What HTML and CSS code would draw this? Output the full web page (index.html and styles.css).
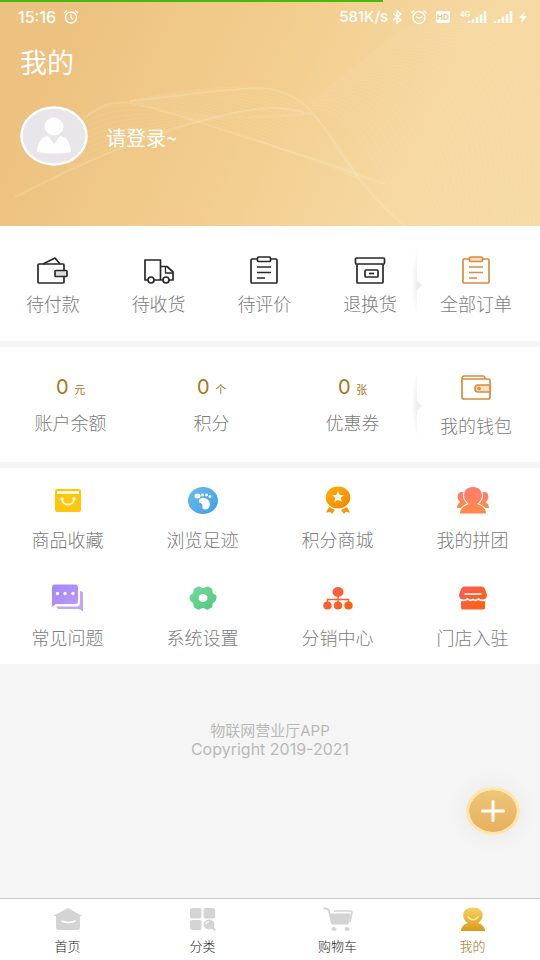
FILE: index.html
```html
<!DOCTYPE html>
<html lang="zh-CN">
<head>
<meta charset="utf-8">
<meta name="viewport" content="width=device-width, initial-scale=1">
<title>我的</title>
<link rel="stylesheet" href="styles.css">
</head>
<body>
<header class="hero">
  <svg class="waves" viewBox="0 0 540 226" preserveAspectRatio="none" aria-hidden="true">
    <g id="mesh"></g>
    <path class="wave-bright" d="M84 118C105 100 125 100 145 106C190 118 210 126 270 145S350 172 385 184"/>
    <path class="wave-bright" d="M130 101C180 96 230 88 262 88C312 93 320 125 360 180C375 198 390 215 406 226"/>
    <path class="wave-bright" d="M15 197C90 158 160 130 220 116S290 110 312 114"/>
  </svg>
  <div class="load"></div>
  <div class="status">
    <span class="clock">15:16</span>
    <svg class="s-alarm" viewBox="0 0 16 16"><circle cx="8" cy="8.500" r="5.500"/><path d="M1 4L4 1.500M15 4L12 1.500M8 5.500V8.500L10 10.500"/></svg>
    <span class="speed">581K/s</span>
    <svg class="s-bt" viewBox="0 0 12 16"><path d="M2 4.500L10 11L6 14V2L10 5L2 11.500"/></svg>
    <svg class="s-alarm2" viewBox="0 0 16 16"><circle cx="8" cy="8.500" r="6"/><path d="M.5 4L3.500 1.500M15.500 4L12.500 1.500M5 7.500L8 9.500L11 7.500"/></svg>
    <svg class="s-hd" viewBox="0 0 16 14"><rect x="1" y="1" width="14" height="12" rx="2"/><text x="8" y="10">HD</text></svg>
    <svg class="s-net" viewBox="0 0 28 16"><text x="1" y="8">4G</text><path d="M10 14V12M14 14V10.500M18 14V8M22 14V5.500M26 14V2"/><path class="dim" d="M2 10V14M5 10V14"/></svg>
    <svg class="s-sig" viewBox="0 0 22 16"><path d="M2 14V12M6 14V10M10 14V7.500M14 14V5M18 14V2"/></svg>
    <svg class="s-bolt" viewBox="0 0 10 16"><path d="M7 2L1 9H4.500L3 14L9 7H5.500Z"/></svg>
  </div>
  <h1 class="title">我的</h1>
  <a class="login" href="#login">
    <svg class="avatar" viewBox="0 0 68 60" aria-hidden="true"><ellipse cx="34" cy="30" rx="32.500" ry="28.500" fill="#e8e6e9" stroke="#fff" stroke-width="2.500"/><ellipse cx="34" cy="20.500" rx="9.500" ry="9" fill="#fff"/><path d="M17 46C17 36 22 31 28 30L34 38L40 30C46 31 51 36 51 46Q34 49 17 46Z" fill="#fff"/></svg>
    <span>请登录~</span>
  </a>
</header>

<main class="content">
  <section class="panel orders">
    <div class="group">
      <a class="item" href="#pay"><svg class="icon line" viewBox="0 0 36 32"><path d="M8 10L20 4L25 10"/><rect x="3" y="10" width="26" height="19" rx="1"/><rect x="20" y="16.500" width="12" height="6" rx="1" fill="#ddd"/></svg><span>待付款</span></a>
      <a class="item" href="#receive"><svg class="icon line" viewBox="0 0 36 32"><path d="M7 26H4V6H19.500V26H13M19.500 12.500H26L32 18V26H28M19.500 26H22"/><path d="M24.500 12.500V19H32" stroke-width="1.300"/><circle cx="10" cy="26" r="3"/><circle cx="25" cy="26" r="3"/></svg><span>待收货</span></a>
      <a class="item" href="#review"><svg class="icon line" viewBox="0 0 36 32"><rect x="5" y="5" width="26" height="24" rx="1"/><rect x="11.500" y="3" width="13" height="4.500" rx="1" fill="#fff"/><path d="M11 13H25M11 18.500H25M11 24H19"/></svg><span>待评价</span></a>
      <a class="item" href="#return"><svg class="icon line" viewBox="0 0 36 32"><rect x="3.500" y="4" width="29" height="6" rx="1"/><path d="M5 10V28Q5 29 6 29H30Q31 29 31 28V10"/><rect x="13" y="16" width="13" height="7" rx="1"/><path d="M17 19.500H22"/></svg><span>退换货</span></a>
    </div>
    <div class="edge"></div>
    <a class="item all" href="#orders"><svg class="icon line gold" viewBox="0 0 36 32"><rect x="5" y="5" width="26" height="24" rx="1"/><rect x="11.500" y="3" width="13" height="4.500" rx="1" fill="#f8dfbd"/><path d="M11 13H25M11 18.500H25M11 24H19"/></svg><span>全部订单</span></a>
  </section>

  <section class="panel wallet">
    <div class="group">
      <a class="stat" href="#balance"><span class="value">0 <small>元</small></span><span>账户余额</span></a>
      <a class="stat" href="#points"><span class="value">0 <small>个</small></span><span>积分</span></a>
      <a class="stat" href="#coupons"><span class="value">0 <small>张</small></span><span>优惠券</span></a>
    </div>
    <div class="edge"></div>
    <a class="item all" href="#wallet"><svg class="icon line gold" viewBox="0 0 36 32"><path d="M4 8V26Q4 28 6 28H30Q32 28 32 26V10Q32 8 30 8H4Q4 5 6 5H25Q27 5 27 8"/><path d="M32 14H20Q17 14 17 17.500T20 21H32Z" fill="#f8dfbd"/><circle cx="21" cy="17.500" r="1"/></svg><span>我的钱包</span></a>
  </section>

  <section class="panel tools">
    <a class="item" href="#favorites"><svg class="icon" viewBox="0 0 36 32"><rect x="5" y="5" width="26" height="23" rx="2" fill="#fdc70d"/><path d="M7 8.500H29" stroke="#fff" stroke-width="2.500"/><path d="M12 15C12 22.500 24 22.500 24 15" fill="none" stroke="#fff" stroke-width="1.600"/><circle cx="12" cy="15" r="1.700" fill="#fff"/><circle cx="24" cy="15" r="1.700" fill="#fff"/></svg><span>商品收藏</span></a>
    <a class="item" href="#history"><svg class="icon" viewBox="0 0 36 32"><defs><linearGradient id="blue" x2="1" y2="1"><stop stop-color="#6bbcee"/><stop offset="1" stop-color="#419fdf"/></linearGradient></defs><ellipse cx="18" cy="16.500" rx="15" ry="13.500" fill="url(#blue)"/><g fill="#fff"><ellipse cx="12.500" cy="12" rx="3" ry="2.500"/><circle cx="17.500" cy="11" r="1.400"/><circle cx="21.500" cy="11" r="1.400"/><circle cx="25" cy="12.500" r="1.400"/><path d="M14 16C15 13 23 13 24.500 18C26 23 22 27 18.500 25C16 23.500 18.500 21.500 17 20C15.500 18.500 13 19 14 16Z"/></g></svg><span>浏览足迹</span></a>
    <a class="item" href="#mall"><svg class="icon" viewBox="0 0 36 32"><defs><linearGradient id="amber" x2="1" y2="1"><stop stop-color="#ffb000"/><stop offset="1" stop-color="#f48600"/></linearGradient></defs><ellipse cx="18" cy="13.500" rx="12.300" ry="11" fill="url(#amber)"/><path d="M18 7L19.700 11L24 11.300L20.700 14L21.800 18L18 15.800L14.200 18L15.300 14L12 11.300L16.300 11Z" fill="#fff"/><path d="M9 23L15 26L12 30L10.500 28L6 28.500ZM27 23L21 26L24 30L25.500 28L30 28.500Z" fill="#f79908"/></svg><span>积分商城</span></a>
    <a class="item" href="#group"><svg class="icon" viewBox="0 0 36 32"><defs><linearGradient id="coral" x2="0" y2="1"><stop stop-color="#ff7b70"/><stop offset="1" stop-color="#ff8b48"/></linearGradient></defs><g fill="url(#coral)"><path d="M8 8C2 7 1 14 5 18C3 20 2 22 2 24H34C34 22 33 20 31 18C35 14 34 7 28 8Z"/><path d="M18 3C9 3 7 12 11 17Q12 19 14 20C8 22 5 25 5 29.500H31C31 25 28 22 22 20Q24 19 25 17C29 12 27 3 18 3Z" stroke="#fff" stroke-width="2" paint-order="stroke"/></g></svg><span>我的拼团</span></a>
    <a class="item" href="#faq"><svg class="icon" viewBox="0 0 36 32"><defs><linearGradient id="violet" x2="1" y2="1"><stop stop-color="#a286f7"/><stop offset="1" stop-color="#ba9cf9"/></linearGradient></defs><path d="M30 9Q33 9 33 11V29.500L29 27H9Q7 27 6 24.500H27Q30 24 30 21Z" fill="#c7a5fa"/><path d="M5 2.500H25Q28 2.500 28 5V19Q28 22 25 22H6L2 25V6Q2 2.500 5 2.500Z" fill="url(#violet)"/><g fill="#fff"><circle cx="7.500" cy="11.500" r="1.700"/><circle cx="15" cy="11.500" r="1.700"/><circle cx="23" cy="11.500" r="1.700"/></g></svg><span>常见问题</span></a>
    <a class="item" href="#settings"><svg class="icon" viewBox="0 0 36 32"><defs><linearGradient id="green" x2="1" y2="1"><stop stop-color="#73d99b"/><stop offset="1" stop-color="#50c980"/></linearGradient></defs><path d="M13 4.500Q15 4 16 5.500Q18 6.500 20 5.500Q21 4 23 4.500L26 6Q28 7 27.500 10Q28 12 30 12.500Q32 13 31.500 16T30 19.500Q28 20 27.500 22Q28 25 26 26L23 27.500Q21 28 20 26.500Q18 25.500 16 26.500Q15 28 13 27.500L10 26Q8 25 8.500 22Q8 20 6 19.500Q4.500 19 4.500 16T6 12.500Q8 12 8.500 10Q8 7 10 6Z" fill="url(#green)"/><ellipse cx="18" cy="16" rx="4.500" ry="4" fill="#fff"/></svg><span>系统设置</span></a>
    <a class="item" href="#distribution"><svg class="icon" viewBox="0 0 36 32"><defs><linearGradient id="red" gradientUnits="userSpaceOnUse" x1="8" y1="5" x2="28" y2="28"><stop stop-color="#f75e55"/><stop offset="1" stop-color="#fc620c"/></linearGradient></defs><g fill="url(#red)"><ellipse cx="18" cy="10" rx="5.500" ry="5"/><ellipse cx="7.500" cy="23.500" rx="4.200" ry="4"/><ellipse cx="18" cy="23.500" rx="4.200" ry="4"/><ellipse cx="28.500" cy="23.500" rx="4.200" ry="4"/></g><path d="M18 14V21M7.500 21V17.500H28.500V21" fill="none" stroke="#f9602d" stroke-width="1.500"/></svg><span>分销中心</span></a>
    <a class="item" href="#store"><svg class="icon" viewBox="0 0 36 32"><g fill="url(#red)"><path d="M9 4.500H27Q29 4.500 30 7L32 13Q32 17 28 17.500Q25 17.500 23.500 16Q21 18.500 18 16.500Q15 18.500 12.500 16Q11 17.500 8 17.500Q4 17 4 13L6 7Q7 4.500 9 4.500Z"/><path d="M6 19Q10 20 12.500 18Q15 20 18 18.500Q21 20 23.500 18Q26 20 30 19V26Q30 27.500 28 27.500H8Q6 27.500 6 26Z"/></g><path d="M9.500 12H26.500" stroke="#fff" stroke-width="1.500"/></svg><span>门店入驻</span></a>
  </section>

  <footer class="legal"><p>物联网营业厅APP</p><p class="copyright">Copyright 2019-2021</p></footer>
</main>

<button class="fab" type="button" aria-label="添加"><svg viewBox="0 0 24 22"><path d="M12 1.500V20.500M1.500 11H22.500"/></svg></button>

<nav class="tabs">
  <a href="#home"><svg class="icon" viewBox="0 0 36 32"><path d="M18 5L32 13H30V24Q30 27 27 27H9Q6 27 6 24V13H3Z" fill="#d4d4d4"/><path d="M12 18Q18 21 25 18" fill="none" stroke="#fff" stroke-width="1.500" stroke-linecap="round"/></svg><span>首页</span></a>
  <a href="#category"><svg class="icon" viewBox="0 0 36 32"><g fill="#d4d4d4"><rect x="5" y="5" width="11.500" height="10.500" rx="2"/><rect x="18.500" y="5" width="11.500" height="10.500" rx="2"/><rect x="5" y="17" width="11.500" height="10" rx="2"/><ellipse cx="24" cy="21.500" rx="5.500" ry="5"/></g><path d="M27 24L30 27.500" stroke="#d4d4d4" stroke-width="2"/><path d="M21 21Q21.500 19 24 18.500" fill="none" stroke="#fff" stroke-width="1.200"/></svg><span>分类</span></a>
  <a href="#cart"><svg class="icon" viewBox="0 0 36 32"><path d="M3.500 5.500H6Q8 5.500 9 8L12 20" fill="none" stroke="#d4d4d4" stroke-width="1.800"/><path d="M9.500 10.500H31L29 19.500Q28.500 21.500 26.500 21.500H13Q11.500 21.500 11 20Z" fill="#d4d4d4"/><path d="M14 8H30Q32.500 8 32 10L30 19" fill="none" stroke="#d4d4d4" stroke-width="1.500"/><ellipse cx="14" cy="26" rx="2.500" ry="2" fill="#d4d4d4"/><ellipse cx="27" cy="26" rx="2.500" ry="2" fill="#d4d4d4"/></svg><span>购物车</span></a>
  <a class="active" href="#me" aria-current="page"><svg class="icon" viewBox="0 0 36 32"><defs><linearGradient id="me" x2="0" y2="1"><stop stop-color="#f7d264"/><stop offset="1" stop-color="#d99b18"/></linearGradient></defs><path d="M18 4.500C6 4.500 6 16 13 20C9 21 6 24 6 28H30C30 24 27 21 23 20C30 16 30 4.500 18 4.500Z" fill="url(#me)"/><path d="M13 14Q18 19.500 23 14" fill="none" stroke="#fff0b8" stroke-width="1.500" stroke-linecap="round"/></svg><span>我的</span></a>
</nav>
<script src="waves.js"></script>
</body>
</html>
```

FILE: styles.css
```css
* {
  box-sizing: border-box;
}

body {
  margin: 0;
  min-height: 100vh;
  display: flex;
  flex-direction: column;
  background: #f5f5f5;
  color: #7c7c7c;
  font: 300 18px/24px "Noto Sans CJK SC", sans-serif;
}

a {
  color: inherit;
  text-decoration: none;
}

svg {
  display: block;
  flex: none;
}

.hero {
  position: relative;
  height: 226px;
  background: linear-gradient(115deg, #edc180 10%, #f2cd8d 45%, #f6d8a1 75%, #f7dba5);
  color: #fff;
}

.waves {
  position: absolute;
  inset: 0;
  width: 100%;
  height: 100%;
  fill: none;
  stroke: #fff3d6;
  stroke-width: 1;
}

#mesh {
  opacity: .12;
}

.wave-bright {
  opacity: .18;
  stroke-width: 2;
}

.load {
  position: relative;
  width: 71%;
  height: 2px;
  background: #48ba0b;
}

.status {
  position: relative;
  display: flex;
  align-items: center;
  height: 30px;
  padding: 0 12px 0 18px;
  font: 500 15px/20px Inter, sans-serif;
}

.status svg {
  height: 16px;
  fill: none;
  stroke: #fff;
  stroke-width: 1.4;
}

.clock {
  font-size: 16px;
}

.s-alarm {
  width: 16px;
  margin-left: 7px;
}

.speed {
  margin-left: auto;
}

.s-bt {
  width: 12px;
  margin: 0 8px 0 3px;
}

.s-alarm2 {
  width: 16px;
  margin-right: 8px;
}

.status .s-hd {
  width: 16px;
  height: 14px;
  margin-right: 8px;
  fill: #fff;
  stroke: none;
}

.s-hd text {
  fill: #eec888;
  font: 700 8px Inter, sans-serif;
  text-anchor: middle;
}

.s-net {
  width: 28px;
  margin-right: 6px;
}

.s-net text {
  fill: #fff;
  stroke: none;
  font: 600 7px Inter, sans-serif;
}

.s-net path,
.s-sig path {
  stroke-width: 2.5;
}

.status .dim {
  opacity: .3;
  stroke-width: 1;
}

.s-sig {
  width: 22px;
  margin-right: 3px;
}

.status .s-bolt {
  width: 10px;
  fill: #fff;
  stroke: none;
}

.title {
  position: relative;
  margin: 12px 20px 0;
  font-size: 27px;
  font-weight: 400;
  line-height: 36px;
}

.login {
  position: relative;
  display: flex;
  align-items: center;
  gap: 18px;
  margin: 26px 20px 0;
  font-size: 20px;
  font-weight: 400;
}

.login span {
  padding-top: 4px;
}

.avatar {
  width: 68px;
  height: 60px;
}

.content {
  flex: 1;
}

.panel {
  background: #fff;
}

.icon {
  width: 36px;
  height: 32px;
}

.line {
  fill: none;
  stroke: #292929;
  stroke-width: 1.7;
  stroke-linejoin: round;
}

.gold {
  stroke: #d78d3e;
}

.item,
.stat {
  display: flex;
  flex-direction: column;
  align-items: center;
  white-space: nowrap;
}

.orders,
.wallet {
  display: grid;
  grid-template-columns: 1fr 106px;
  position: relative;
  margin-bottom: 6px;
  padding-right: 11px;
}

.orders {
  padding-top: 28px;
  padding-bottom: 26px;
}

.wallet {
  padding-top: 24px;
  padding-bottom: 25px;
}

.group {
  display: grid;
  grid-auto-flow: column;
  grid-auto-columns: 1fr;
}

.orders .item {
  gap: 5px;
}

.wallet .item {
  gap: 10px;
}

.stat {
  gap: 8px;
  padding-top: 4px;
}

.value {
  color: #a8751a;
  font-size: 20px;
  font-family: Inter, "Noto Sans CJK SC", sans-serif;
  font-weight: 400;
}

.value small {
  font-size: 11px;
}

.edge {
  position: absolute;
  top: 24px;
  right: 123px;
  width: 5px;
  height: 66px;
  background: radial-gradient(ellipse at right, #ededed, #fff 75%);
}

.edge::after {
  content: "";
  position: absolute;
  top: 30px;
  left: 5px;
  border: 5px solid transparent;
  border-left-color: #ededed;
  border-right: 0;
}

.tools {
  display: grid;
  grid-template-columns: repeat(4, 1fr);
  row-gap: 31px;
  padding: 16px 0 15px;
}

.tools .item {
  gap: 11px;
}

.legal {
  padding: 58px 0 40px;
  color: #b9b9b9;
  font-family: Inter, "Noto Sans CJK SC", sans-serif;
  font-size: 15px;
  font-weight: 400;
  line-height: 18px;
  text-align: center;
}

.legal p {
  margin: 0;
}

.legal .copyright {
  font-size: 16px;
}

.fab {
  position: fixed;
  right: 20px;
  bottom: 125px;
  display: grid;
  place-items: center;
  width: 54px;
  height: 48px;
  padding: 0;
  border: 3px solid #ffe5ac;
  border-radius: 50%;
  background: linear-gradient(#ecc677, #e8b060) padding-box;
  box-shadow: 0 0 24px rgba(0, 0, 0, .06);
}

.fab svg {
  width: 24px;
  height: 22px;
  stroke: #fff;
  stroke-width: 3;
  stroke-linecap: round;
}

.tabs {
  display: grid;
  grid-template-columns: repeat(4, 1fr);
  padding: 4px 0;
  border-top: 1px solid #c8c8c8;
  background: #fff;
  color: #222;
  font-size: 13px;
  line-height: 20px;
}

.tabs a {
  display: flex;
  flex-direction: column;
  align-items: center;
  gap: 1px;
}

.tabs .active {
  color: #a06f10;
}
```

FILE: waves.js
```js
// Fills the header with fine lines blended between pairs of cubic curves.
const mesh = document.getElementById("mesh");

function blend(from, to, count) {
  for (let i = 0; i <= count; i++) {
    const p = from.map((v, k) => (v + (to[k] - v) * i / count).toFixed(1));
    const path = document.createElementNS("http://www.w3.org/2000/svg", "path");
    path.setAttribute("d", `M${p[0]} ${p[1]}C${p.slice(2).join(" ")}`);
    mesh.append(path);
  }
}

blend([300, 110, 350, 95, 375, 170, 410, 226], [400, 30, 560, -10, 560, 100, 550, 226], 34);
blend([130, 101, 200, 115, 260, 140, 360, 180], [130, 101, 250, 75, 310, 80, 360, 180], 14);
blend([84, 118, 130, 85, 180, 130, 312, 114], [50, 180, 130, 130, 200, 115, 312, 114], 8);
```
